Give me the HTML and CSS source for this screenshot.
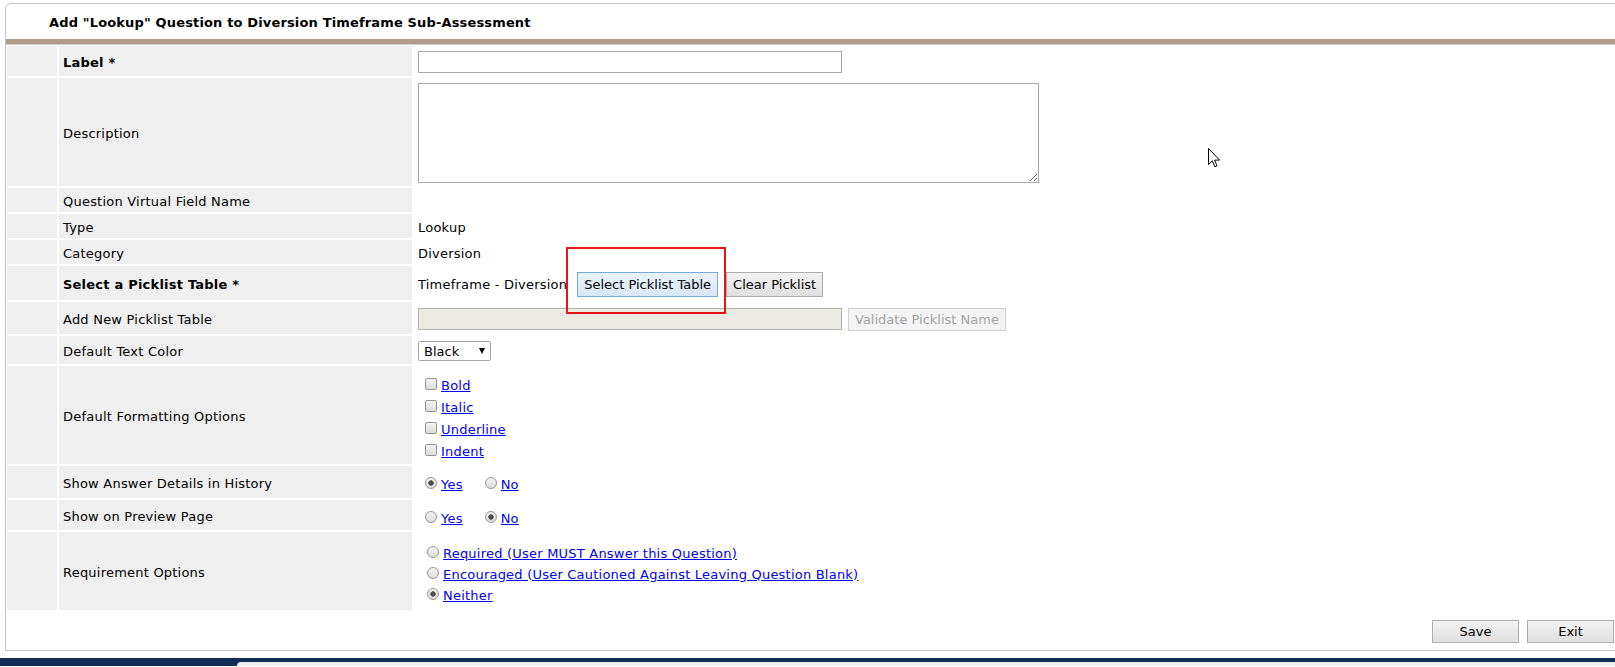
FILE: index.html
```html
<!DOCTYPE html>
<html lang="en">
<head>
<meta charset="UTF-8" />
<meta name="viewport" content="width=device-width, initial-scale=1" />
<title>Add Lookup Question</title>
<link rel="stylesheet" href="styles.css">
</head>
<body>

  <div class="panel">
    <h2 class="panel-title">Add "Lookup" Question to Diversion Timeframe Sub-Assessment</h2>

    <table class="form-table">
      <colgroup>
        <col class="col-gutter">
        <col class="col-caption">
        <col>
      </colgroup>
      <tr class="r-label">
        <td class="gutter"></td>
        <td class="caption"><b>Label *</b></td>
        <td class="field"><input type="text" class="text-input"></td>
      </tr>
      <tr class="r-description">
        <td class="gutter"></td>
        <td class="caption">Description</td>
        <td class="field"><textarea class="text-area"></textarea></td>
      </tr>
      <tr class="r-short">
        <td class="gutter"></td>
        <td class="caption">Question Virtual Field Name</td>
        <td class="field"></td>
      </tr>
      <tr class="r-short">
        <td class="gutter"></td>
        <td class="caption">Type</td>
        <td class="field">Lookup</td>
      </tr>
      <tr class="r-short">
        <td class="gutter"></td>
        <td class="caption">Category</td>
        <td class="field">Diversion</td>
      </tr>
      <tr class="r-picklist">
        <td class="gutter"></td>
        <td class="caption"><b>Select a Picklist Table *</b></td>
        <td class="field">
          <div class="inline-row">
            <span>Timeframe - Diversion</span>
            <button class="btn btn-active btn-first">Select Picklist Table</button>
            <button class="btn btn-next">Clear Picklist</button>
          </div>
        </td>
      </tr>
      <tr class="r-newtable">
        <td class="gutter"></td>
        <td class="caption">Add New Picklist Table</td>
        <td class="field">
          <div class="inline-row">
            <input type="text" class="text-input" disabled>
            <button class="btn btn-validate" disabled>Validate Picklist Name</button>
          </div>
        </td>
      </tr>
      <tr class="r-color">
        <td class="gutter"></td>
        <td class="caption">Default Text Color</td>
        <td class="field">
          <span class="select-wrap">
            <select class="select">
              <option>Black</option>
            </select>
          </span>
        </td>
      </tr>
      <tr class="r-formatting">
        <td class="gutter"></td>
        <td class="caption">Default Formatting Options</td>
        <td class="field">
          <label class="check-line"><input type="checkbox" class="check"><a href="#">Bold</a></label>
          <label class="check-line"><input type="checkbox" class="check"><a href="#">Italic</a></label>
          <label class="check-line"><input type="checkbox" class="check"><a href="#">Underline</a></label>
          <label class="check-line"><input type="checkbox" class="check"><a href="#">Indent</a></label>
        </td>
      </tr>
      <tr class="r-history">
        <td class="gutter"></td>
        <td class="caption">Show Answer Details in History</td>
        <td class="field">
          <div class="choices">
            <label class="choice"><input type="radio" name="history" class="radio" checked><a href="#">Yes</a></label>
            <label class="choice"><input type="radio" name="history" class="radio"><a href="#">No</a></label>
          </div>
        </td>
      </tr>
      <tr class="r-preview">
        <td class="gutter"></td>
        <td class="caption">Show on Preview Page</td>
        <td class="field">
          <div class="choices">
            <label class="choice"><input type="radio" name="preview" class="radio"><a href="#">Yes</a></label>
            <label class="choice"><input type="radio" name="preview" class="radio" checked><a href="#">No</a></label>
          </div>
        </td>
      </tr>
      <tr class="r-requirement">
        <td class="gutter"></td>
        <td class="caption">Requirement Options</td>
        <td class="field">
          <label class="req-line"><input type="radio" name="req" class="radio"><a href="#">Required (User MUST Answer this Question)</a></label>
          <label class="req-line"><input type="radio" name="req" class="radio"><a href="#">Encouraged (User Cautioned Against Leaving Question Blank)</a></label>
          <label class="req-line"><input type="radio" name="req" class="radio" checked><a href="#">Neither</a></label>
        </td>
      </tr>
    </table>

    <div class="actions">
      <button class="btn btn-wide">Save</button>
      <button class="btn btn-wide">Exit</button>
    </div>
  </div>

  <div class="footer-bar">
    <div class="footer-tab"></div>
  </div>

  <!-- annotation + mouse pointer from the screenshot -->
  <div class="callout"></div>
  <svg class="pointer" width="13" height="21" viewBox="0 0 13 21">
    <path d="M0.5 0.5 L0.5 16.5 L4.3 12.9 L6.8 18.8 L9 17.9 L6.6 12.1 L11.6 12.1 Z" fill="#fff" stroke="#000" stroke-width="1"/>
  </svg>

</body>
</html>
```

FILE: styles.css
```css
* {
  box-sizing: border-box;
}

html {
  overflow: hidden;
}

body {
  margin: 0;
  font-family: "DejaVu Sans", Verdana, sans-serif;
  font-size: 13px;
  letter-spacing: 0.22px;
  color: #000;
  background: #fff;
}

a {
  color: #0000ee;
  text-decoration: underline;
}

.panel {
  margin: 3px 0 0 5px;
  width: 1611px;
  border: 1px solid #c6c6c6;
  border-radius: 6px 0 0 0;
}

.panel-title {
  margin: 0;
  height: 40px;
  padding-left: 43px;
  line-height: 37px;
  font-size: 13px;
  font-weight: bold;
  letter-spacing: 0.15px;
  border-bottom: 5px solid #b19c8a;
  box-shadow: 0 1px 0 #cfcfcf;
}

.form-table {
  margin-left: -1px;
  width: 100%;
  table-layout: fixed;
  border-spacing: 2px;
}

.col-gutter {
  width: 50px;
}

.col-caption {
  width: 353px;
}

.form-table td {
  padding: 2px 4px 0;
  vertical-align: middle;
}

.gutter,
.caption {
  background: #efefef;
}

.r-label td { height: 30px; }
.r-description td { height: 108px; }
.r-short td { height: 24px; }
.r-picklist td { height: 34px; }
.r-newtable td { height: 32px; }
.r-color td { height: 28px; }
.r-formatting td { height: 98px; }
.r-history td { height: 32px; }
.r-preview td { height: 30px; }
.r-requirement td { height: 78px; }

.r-formatting .field {
  padding-top: 8px;
}

.r-history .field {
  padding-top: 5px;
}

.r-preview .field,
.r-requirement .field {
  padding-top: 6px;
}

.text-input {
  display: block;
  width: 424px;
  height: 22px;
  margin: 0;
  border: 1px solid #a9a9a9;
  font: 13px "DejaVu Sans", Verdana, sans-serif;
}

.text-input:disabled {
  background: #ebebe4;
  border-color: #b5b5b0;
}

.text-area {
  display: block;
  width: 621px;
  height: 100px;
  margin: 0;
  border: 1px solid #a9a9a9;
  font: 13px "DejaVu Sans", Verdana, sans-serif;
}

.inline-row {
  display: flex;
  align-items: center;
}

.btn {
  height: 25px;
  padding: 0 6px;
  border: 1px solid #adadad;
  border-radius: 0;
  background: linear-gradient(#f3f3f3, #dfdfdf);
  font: 13px "DejaVu Sans", Verdana, sans-serif;
  color: #000;
}

.btn-active {
  border-color: #76a9dc;
  background: linear-gradient(#eaf3fc, #d8e7f6);
}

.btn-first {
  margin-left: 10px;
}

.btn-next {
  margin-left: 8px;
}

.btn-validate {
  height: 23px;
  margin-left: 6px;
  color: #a3a3a3;
  border-color: #cfcfcf;
  background: #f4f4f4;
}

.select-wrap {
  position: relative;
  display: inline-block;
  vertical-align: middle;
}

.select-wrap::after {
  content: "";
  position: absolute;
  right: 6px;
  top: 7px;
  border-left: 3.5px solid transparent;
  border-right: 3.5px solid transparent;
  border-top: 6px solid #000;
  pointer-events: none;
}

.select {
  appearance: none;
  display: block;
  width: 73px;
  height: 20px;
  margin: 0;
  padding: 0 0 0 5px;
  border: 1px solid #a9a9a9;
  border-radius: 2px;
  background: #fff;
  font: 13px "DejaVu Sans", Verdana, sans-serif;
  color: #000;
}

.check,
.radio {
  appearance: none;
  width: 12px;
  height: 12px;
  margin: 0 4px 0 7px;
  vertical-align: 0;
  border: 1px solid #959595;
  background: linear-gradient(#f4f4f4, #dcdcdc);
}

.check {
  border-radius: 2px;
}

.radio {
  border-radius: 50%;
}

.radio:checked {
  background: radial-gradient(circle, #4d4d4d 0 2.4px, transparent 3px), linear-gradient(#f4f4f4, #dcdcdc);
}

.check-line {
  display: block;
  height: 22px;
  line-height: 22px;
}

.choices {
  display: flex;
  align-items: baseline;
}

.choice + .choice {
  margin-left: 15px;
}

.req-line {
  display: block;
  height: 21px;
  line-height: 21px;
}

.req-line .radio {
  margin-left: 9px;
}

.actions {
  display: flex;
  justify-content: flex-end;
  gap: 8px;
  padding: 8px 1px 7px 0;
}

.btn-wide {
  width: 87px;
  height: 23px;
}

.footer-bar {
  margin-top: 7px;
  height: 8px;
  padding-top: 4px;
  background: #0f2d57;
}

.footer-tab {
  margin-left: 237px;
  height: 4px;
  background: #eef0f3;
  border-radius: 4px 0 0 0;
}

.callout {
  position: absolute;
  left: 566px;
  top: 247px;
  width: 160px;
  height: 67px;
  border: 2px solid #e8141c;
}

.pointer {
  position: absolute;
  left: 1208px;
  top: 148px;
}
```
